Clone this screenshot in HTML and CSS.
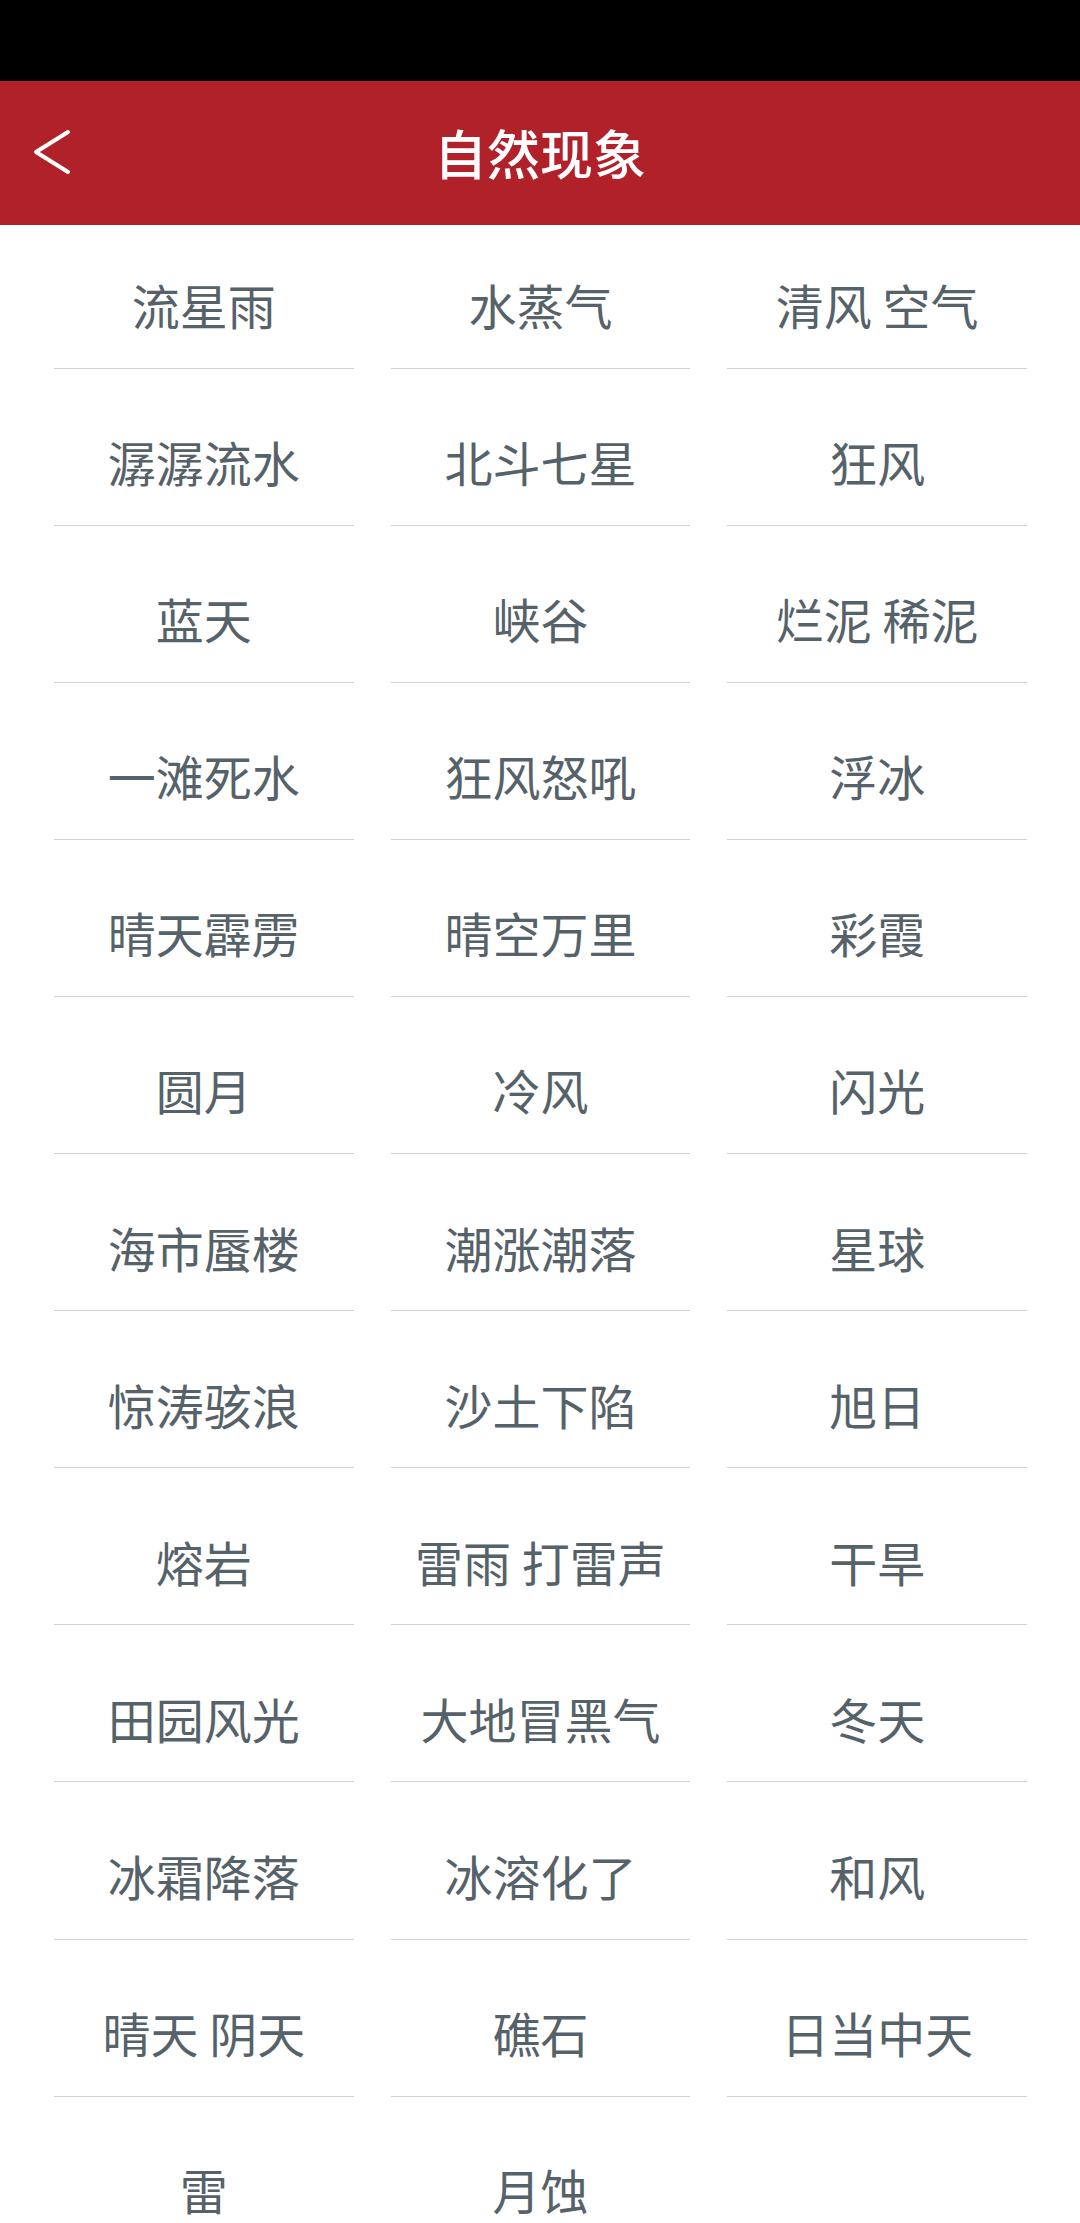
FILE: index.html
```html
<!DOCTYPE html>
<html lang="zh">
<head>
<meta charset="utf-8">
<title>自然现象</title>
<link rel="stylesheet" href="styles.css">
</head>
<body>
<div class="statusbar"></div>
<header class="appbar">
  <div class="back">
    <svg width="40" height="46" viewBox="0 0 40 46"><polyline points="35,3 3,23 35,43" fill="none" stroke="#fff" stroke-width="4" stroke-linecap="round" stroke-linejoin="round"/></svg>
  </div>
  <h1 class="title">自然现象</h1>
</header>
<main class="grid">
  <div class="cell">流星雨</div>
  <div class="cell">水蒸气</div>
  <div class="cell">清风 空气</div>
  <div class="cell">潺潺流水</div>
  <div class="cell">北斗七星</div>
  <div class="cell">狂风</div>
  <div class="cell">蓝天</div>
  <div class="cell">峡谷</div>
  <div class="cell">烂泥 稀泥</div>
  <div class="cell">一滩死水</div>
  <div class="cell">狂风怒吼</div>
  <div class="cell">浮冰</div>
  <div class="cell">晴天霹雳</div>
  <div class="cell">晴空万里</div>
  <div class="cell">彩霞</div>
  <div class="cell">圆月</div>
  <div class="cell">冷风</div>
  <div class="cell">闪光</div>
  <div class="cell">海市蜃楼</div>
  <div class="cell">潮涨潮落</div>
  <div class="cell">星球</div>
  <div class="cell">惊涛骇浪</div>
  <div class="cell">沙土下陷</div>
  <div class="cell">旭日</div>
  <div class="cell">熔岩</div>
  <div class="cell">雷雨 打雷声</div>
  <div class="cell">干旱</div>
  <div class="cell">田园风光</div>
  <div class="cell">大地冒黑气</div>
  <div class="cell">冬天</div>
  <div class="cell">冰霜降落</div>
  <div class="cell">冰溶化了</div>
  <div class="cell">和风</div>
  <div class="cell">晴天 阴天</div>
  <div class="cell">礁石</div>
  <div class="cell">日当中天</div>
  <div class="cell">雷</div>
  <div class="cell">月蚀</div>
</main>
</body>
</html>
```
FILE: styles.css
```css
html, body {
  margin: 0;
  padding: 0;
  background: #ffffff;
  font-family: "Noto Sans CJK SC", "Noto Sans", sans-serif;
}
body {
  height: 2223px;
  overflow: hidden;
}
.statusbar {
  height: 81px;
  background: #000000;
}
.appbar {
  height: 144px;
  background: #b1212a;
  display: flex;
  align-items: center;
  justify-content: center;
  position: relative;
}
.back {
  position: absolute;
  left: 33px;
  top: 48px;
  width: 40px;
  height: 46px;
  display: flex;
}
.title {
  margin: 0;
  color: #ffffff;
  font-size: 53px;
  font-weight: 500;
  line-height: 1;
  padding-bottom: 2px;
}
.grid {
  display: grid;
  grid-template-columns: repeat(3, 1fr);
  column-gap: 37px;
  row-gap: 13.5px;
  padding: 0 53px 0 54px;
}
.cell {
  padding-top: 55px;
  padding-bottom: 39.6px;
  border-bottom: 1.5px solid #d2d2d2;
  display: flex;
  justify-content: center;
  color: #56626a;
  font-size: 48px;
  line-height: 48px;
  white-space: nowrap;
}
```
